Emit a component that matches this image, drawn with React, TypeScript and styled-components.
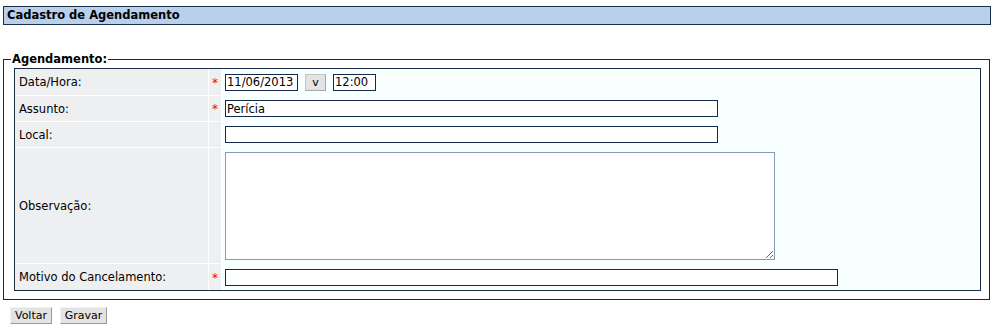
import React, { useState } from 'react';
import styled, { createGlobalStyle } from 'styled-components';

const GlobalStyle = createGlobalStyle`
    body {
        margin: 0;
        background: #ffffff;
        font-family: "DejaVu Sans", Verdana, sans-serif;
        font-size: 11.5px;
        color: #000;
    }
`;

const Page = styled.div`
    padding: 6px 4px 0 3px;
`;

const TitleBar = styled.div`
    height: 17px;
    line-height: 17px;
    padding: 0 3px;
    background: #b8d0ec;
    border: 1px solid #1a2e4a;
    font-weight: bold;
    font-size: 11.5px;
`;

const Fieldset = styled.fieldset`
    margin: 27px 1px 0 0;
    padding: 2px 8px 8px 10px;
    border: 1px solid #0f2f38;
    min-width: 0;
`;

const Legend = styled.legend`
    padding: 0 1px;
    margin-left: -3px;
    font-weight: bold;
    font-size: 11.5px;
`;

const FormGrid = styled.div`
    display: grid;
    grid-template-columns: 193px 12px 1fr;
    grid-template-rows: 26px 25px 25px 115px 26px;
    gap: 1px;
    background: #ffffff;
    border: 1px solid #1b2d45;
`;

const LabelCell = styled.div`
    display: flex;
    align-items: center;
    padding-left: 4px;
    background: #eeeff1;
`;

const MarkCell = styled.div`
    display: flex;
    align-items: center;
    justify-content: center;
    background: #eeeff1;
    color: #ff0000;
    font-size: 12px;
    padding-top: 1px;
`;

const ValueCell = styled.div`
    display: flex;
    align-items: center;
    gap: 7px;
    padding: 0 3px;
    background: #f7ffff;
`;

const TextInput = styled.input<{ w: number }>`
    box-sizing: border-box;
    width: ${({ w }) => w}px;
    height: 17px;
    padding: 0 1px;
    margin: 0;
    border: 1px solid #15284a;
    background: #ffffff;
    font-family: "DejaVu Sans", Verdana, sans-serif;
    font-size: 11.5px;
    color: #000;
    outline: none;
`;

const TextArea = styled.textarea`
    box-sizing: border-box;
    width: 550px;
    height: 108px;
    margin: 1px 0 0;
    border: 1px solid #7f9db9;
    background: #ffffff;
    font-family: "DejaVu Sans", Verdana, sans-serif;
    font-size: 11.5px;
    outline: none;
`;

const Button = styled.button<{ w: number }>`
    box-sizing: border-box;
    width: ${({ w }) => w}px;
    height: 17px;
    padding: 0;
    margin: 0;
    background: #e3e3e3;
    border: 1px solid;
    border-color: #f2f2f2 #9a9a9a #9a9a9a #f2f2f2;
    font-family: "DejaVu Sans", sans-serif;
    font-size: 11px;
    line-height: 13px;
    color: #000;
    cursor: pointer;
`;

const PickerButton = styled(Button)`
    border-color: #c4c4c4 #a8a8a8 #a8a8a8 #c4c4c4;
`;

const Actions = styled.div`
    display: flex;
    gap: 8px;
    margin: 7px 0 0 7px;
`;

const App: React.FC = () => {
    const [data, setData] = useState<string>('11/06/2013');
    const [hora, setHora] = useState<string>('12:00');
    const [assunto, setAssunto] = useState<string>('Perícia');
    const [local, setLocal] = useState<string>('');
    const [obs, setObs] = useState<string>('');
    const [motivo, setMotivo] = useState<string>('');

    return (
        <Page>
            <GlobalStyle />
            <TitleBar>Cadastro de Agendamento</TitleBar>

            <Fieldset>
                <Legend>Agendamento:</Legend>
                <FormGrid>
                    <LabelCell>Data/Hora:</LabelCell>
                    <MarkCell>*</MarkCell>
                    <ValueCell>
                        <TextInput w={73} value={data} onChange={(e) => setData(e.target.value)} />
                        <PickerButton type="button" w={21}>v</PickerButton>
                        <TextInput w={43} value={hora} onChange={(e) => setHora(e.target.value)} />
                    </ValueCell>

                    <LabelCell>Assunto:</LabelCell>
                    <MarkCell>*</MarkCell>
                    <ValueCell>
                        <TextInput w={493} value={assunto} onChange={(e) => setAssunto(e.target.value)} />
                    </ValueCell>

                    <LabelCell>Local:</LabelCell>
                    <MarkCell />
                    <ValueCell>
                        <TextInput w={493} value={local} onChange={(e) => setLocal(e.target.value)} />
                    </ValueCell>

                    <LabelCell>Observação:</LabelCell>
                    <MarkCell />
                    <ValueCell>
                        <TextArea value={obs} onChange={(e) => setObs(e.target.value)} />
                    </ValueCell>

                    <LabelCell>Motivo do Cancelamento:</LabelCell>
                    <MarkCell>*</MarkCell>
                    <ValueCell>
                        <TextInput w={613} value={motivo} onChange={(e) => setMotivo(e.target.value)} />
                    </ValueCell>
                </FormGrid>
            </Fieldset>

            <Actions>
                <Button type="button" w={42}>Voltar</Button>
                <Button type="button" w={47}>Gravar</Button>
            </Actions>
        </Page>
    );
};

export default App;
